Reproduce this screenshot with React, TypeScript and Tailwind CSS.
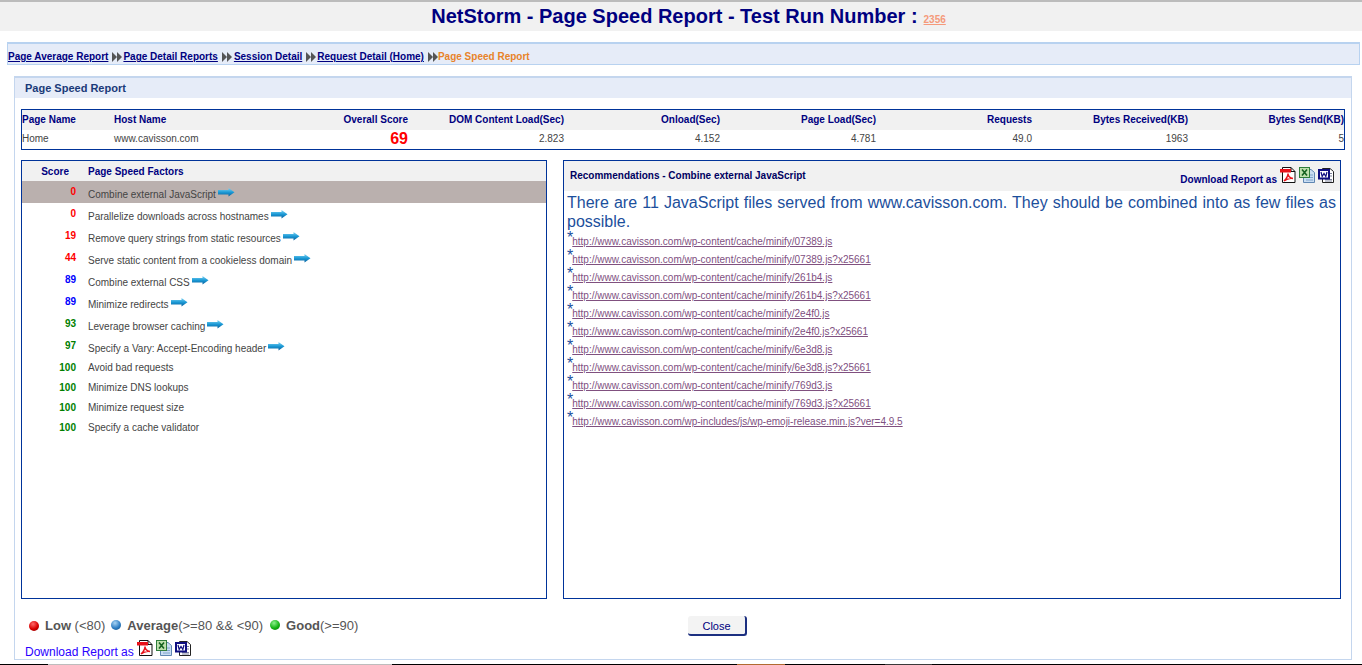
const summaryHeaders = [
  "DOM Content Load(Sec)",
  "Onload(Sec)",
  "Page Load(Sec)",
  "Requests",
  "Bytes Received(KB)",
  "Bytes Send(KB)",
];
const summaryValues = ["2.823", "4.152", "4.781", "49.0", "1963", "5"];

const factors = [
  { score: 0, name: "Combine external JavaScript", arrow: true },
  { score: 0, name: "Parallelize downloads across hostnames", arrow: true },
  { score: 19, name: "Remove query strings from static resources", arrow: true },
  { score: 44, name: "Serve static content from a cookieless domain", arrow: true },
  { score: 89, name: "Combine external CSS", arrow: true },
  { score: 89, name: "Minimize redirects", arrow: true },
  { score: 93, name: "Leverage browser caching", arrow: true },
  { score: 97, name: "Specify a Vary: Accept-Encoding header", arrow: true },
  { score: 100, name: "Avoid bad requests", arrow: false },
  { score: 100, name: "Minimize DNS lookups", arrow: false },
  { score: 100, name: "Minimize request size", arrow: false },
  { score: 100, name: "Specify a cache validator", arrow: false },
];

const links = [
  "http://www.cavisson.com/wp-content/cache/minify/07389.js",
  "http://www.cavisson.com/wp-content/cache/minify/07389.js?x25661",
  "http://www.cavisson.com/wp-content/cache/minify/261b4.js",
  "http://www.cavisson.com/wp-content/cache/minify/261b4.js?x25661",
  "http://www.cavisson.com/wp-content/cache/minify/2e4f0.js",
  "http://www.cavisson.com/wp-content/cache/minify/2e4f0.js?x25661",
  "http://www.cavisson.com/wp-content/cache/minify/6e3d8.js",
  "http://www.cavisson.com/wp-content/cache/minify/6e3d8.js?x25661",
  "http://www.cavisson.com/wp-content/cache/minify/769d3.js",
  "http://www.cavisson.com/wp-content/cache/minify/769d3.js?x25661",
  "http://www.cavisson.com/wp-includes/js/wp-emoji-release.min.js?ver=4.9.5",
];

function scoreColor(score: number) {
  if (score < 80) return "text-[#ff0000]";
  if (score < 90) return "text-[#0000ff]";
  return "text-[#008000]";
}

function Arrow() {
  return (
    <svg width="17" height="9" viewBox="0 0 17 9" className="ml-[2px] mt-[1px] shrink-0">
      <defs>
        <linearGradient id="arrowFill" x1="0" y1="0" x2="0" y2="1">
          <stop offset="0" stopColor="#7fd4f4" />
          <stop offset="0.5" stopColor="#1b9ad6" />
          <stop offset="1" stopColor="#0a5f9c" />
        </linearGradient>
      </defs>
      <path d="M0 2H10.5V0L16.5 4.2L10.5 8.5V6.5H0Z" fill="url(#arrowFill)" />
    </svg>
  );
}

function Crumb() {
  return (
    <svg width="10" height="10" viewBox="0 0 10 10" className="ml-[4px] mt-[1px] shrink-0">
      <path d="M0 0L5 5L0 10Z" fill="#555" />
      <path d="M5 0L10 5L5 10Z" fill="#555" />
    </svg>
  );
}

function PdfIcon() {
  return (
    <svg width="16" height="16" viewBox="0 0 16 16" className="shrink-0">
      <path d="M2.5 .5H11L15 4.5V15.5H2.5Z" fill="#fff" stroke="#111" />
      <path d="M11 .5V4.5H15" fill="none" stroke="#111" />
      <rect x="0" y="2" width="11" height="3.5" fill="#e8121a" />
      <path d="M4 14C6 12 8 9 8 6.5C8 9 10 11 13 11.5C10 11 6.5 12 4 14Z" fill="none" stroke="#e8121a" strokeWidth="1.4" />
    </svg>
  );
}

function SheetIcon() {
  return (
    <svg width="16" height="16" viewBox="0 0 16 16" className="shrink-0">
      <path d="M4.5 2.5H12L15.5 5.5V15.5H4.5Z" fill="#c9ddf2" stroke="#5f86b2" />
      <path d="M7 8H14M7 10.5H14M7 13H14" stroke="#7fa4cc" />
      <rect x="0.5" y="0.5" width="10" height="10" fill="#bfe0ae" stroke="#2f7d3a" />
      <path d="M3 2.5L8 8.5M8 2.5L3 8.5" stroke="#14611f" strokeWidth="1.6" />
    </svg>
  );
}

function DocIcon() {
  return (
    <svg width="16" height="16" viewBox="0 0 16 16" className="shrink-0">
      <path d="M4.5 1.5H12L15.5 4.5V15.5H4.5Z" fill="#fff" stroke="#222" />
      <path d="M11.5 6.5H14M11.5 9H14M7 12.5H14M7 14H14" stroke="#7d829c" />
      <rect x="1" y="3" width="10" height="8.5" fill="#fff" stroke="#0e0e80" strokeWidth="2" />
      <path d="M3 5L4.2 9.5L6 6.5L7.8 9.5L9 5" fill="none" stroke="#0e0e80" strokeWidth="1.2" />
    </svg>
  );
}

function Ball({ color }: { color: "red" | "blue" | "green" }) {
  const fill = {
    red: "bg-[radial-gradient(circle_at_40%_30%,#ff6a6a,#d80000_55%,#7a0000)]",
    blue: "bg-[radial-gradient(circle_at_40%_30%,#a8d4f4,#2f7fc4_55%,#0f4a80)]",
    green: "bg-[radial-gradient(circle_at_40%_30%,#8cf08c,#14b414_55%,#0a700a)]",
  }[color];
  return <span className={`inline-block h-[10px] w-[10px] rounded-full ${fill}`} />;
}

export default function App() {
  return (
    <div className="relative h-[665px] w-[1362px] overflow-hidden bg-white font-['Liberation_Sans',Arial,sans-serif]">
      <header className="flex h-[31px] items-center justify-center border-t-2 border-[#bcbcbc] bg-[#f1f1f1] pb-[2px] pl-[15px]">
        <h1 className="text-[20px] font-bold text-[#000080]">
          NetStorm - Page Speed Report - Test Run Number :
        </h1>
        <a className="ml-[6px] mt-[7px] text-[10px] font-bold text-[#f59a7b] underline">2356</a>
      </header>

      <nav className="ml-[7px] mt-[11px] flex h-[23px] w-[1353px] items-center border border-t-2 border-[#b8d2f0] bg-[#e6ecf8] pt-[5px] text-[10px] font-bold">
        <a className="text-[#000080] underline">Page Average Report</a>
        <Crumb />
        <a className="ml-[1px] text-[#000080] underline">Page Detail Reports</a>
        <Crumb />
        <a className="ml-[2px] text-[#000080] underline">Session Detail</a>
        <Crumb />
        <a className="ml-[1px] text-[#000080] underline">Request Detail (Home)</a>
        <Crumb />
        <span className="text-[#e8832a]">Page Speed Report</span>
      </nav>

      <main className="ml-[14px] mt-[11px] h-[584px] w-[1338px] border border-t-2 border-[#c4d6ee] pr-[6px]">
        <h2 className="flex h-[20px] w-[1336px] items-center bg-[#e6ecf8] pl-[10px] text-[11px] font-bold text-[#1a3a78]">
          Page Speed Report
        </h2>

        <section className="ml-[6px] mt-[11px] h-[41px] w-[1324px] border border-[#003399] text-[10px] leading-none">
          <div className="grid h-[20px] grid-cols-[92px_202px_92px_repeat(6,156px)] items-center bg-[#f1f1f1] pb-[1px] font-bold text-[#000080]">
            <div>Page Name</div>
            <div>Host Name</div>
            <div className="text-right">Overall Score</div>
            {summaryHeaders.map((h) => (
              <div key={h} className="text-right">{h}</div>
            ))}
          </div>
          <div className="grid h-[19px] grid-cols-[92px_202px_92px_repeat(6,156px)] items-center pb-[2px] text-[#444]">
            <div>Home</div>
            <div>www.cavisson.com</div>
            <div className="text-right text-[16px] font-bold text-[#ff0000]">69</div>
            {summaryValues.map((v, i) => (
              <div key={i} className="text-right">{v}</div>
            ))}
          </div>
        </section>

        <div className="ml-[6px] mt-[10px] flex gap-[16px]">
          <section className="h-[439px] w-[526px] border border-[#003399]">
            <div className="flex h-[20px] items-center bg-[#f1f1f1] text-[10px] font-bold text-[#000080]">
              <span className="w-[47px] text-right">Score</span>
              <span className="ml-[19px]">Page Speed Factors</span>
            </div>
            {factors.map((f, i) => (
              <div
                key={f.name}
                className={`flex items-center text-[10px] ${f.arrow ? "h-[22px]" : "h-[20px]"} ${i === 0 ? "bg-[#bab0ae]" : ""}`}
              >
                <span className={`w-[54px] text-right font-bold ${f.arrow ? "mb-[2px]" : ""} ${scoreColor(f.score)}`}>{f.score}</span>
                <span className={`ml-[12px] text-[#444] ${f.arrow ? "mt-[4px]" : ""}`}>{f.name}</span>
                {f.arrow && <Arrow />}
              </div>
            ))}
          </section>

          <section className="h-[439px] w-[778px] border border-[#003399]">
            <div className="relative h-[30px] bg-[#f1f1f1]">
              <div className="pl-[6px] pt-[7px] text-[10px] font-bold text-[#000060]">
                Recommendations - Combine external JavaScript
              </div>
              <div className="absolute right-[6px] top-[6px] flex items-end gap-[3px]">
                <span className="mb-[-4px] text-[10px] font-bold text-[#000080]">Download Report as</span>
                <PdfIcon />
                <SheetIcon />
                <DocIcon />
              </div>
            </div>
            <div className="px-[3px] pt-[2px]">
              <p className="pr-[1px] text-justify text-[16px] leading-[19px] text-[#1c4f9c]">
                There are 11 JavaScript files served from www.cavisson.com. They should be combined into as few files as possible.
              </p>
              <ul>
                {links.map((l) => (
                  <li key={l} className="flex h-[18px] items-start">
                    <span className="mr-[-1px] mt-[-1px] text-[16px] leading-[16px] text-[#1c4f9c]">*</span>
                    <a className="mt-[5px] text-[10px] leading-[12px] text-[#80507f] underline">{l}</a>
                  </li>
                ))}
              </ul>
            </div>
          </section>
        </div>

        <div className="relative ml-[14px] mt-[18px] flex h-[18px] items-center text-[13px] text-[#555]">
          <Ball color="red" />
          <span className="ml-[6px]"><b>Low</b> (&lt;80)</span>
          <span className="ml-[6px]"><Ball color="blue" /></span>
          <span className="ml-[6px]"><b>Average</b>(&gt;=80 &amp;&amp; &lt;90)</span>
          <span className="ml-[7px]"><Ball color="green" /></span>
          <span className="ml-[6px]"><b>Good</b>(&gt;=90)</span>
          <button className="absolute left-[659px] top-[-1px] h-[20px] w-[59px] rounded-[3px] border-r-2 border-b-2 border-[#1c2f80] bg-[#f3f3f3] pt-[2px] text-[11px] text-[#000080]">
            Close
          </button>
        </div>

        <div className="ml-[10px] mt-[5px] flex items-start gap-[3px]">
          <span className="mt-[3px] text-[12px] text-[#2a00ff]">Download Report as</span>
          <PdfIcon />
          <SheetIcon />
          <DocIcon />
        </div>
      </main>

      <div className="absolute bottom-0 left-0 flex h-[1px] w-full bg-black">
        <span className="ml-[48px] w-[344px] bg-[#bdbdbd]" />
        <span className="ml-[345px] w-[48px] bg-[#b06a30]" />
        <span className="ml-[100px] w-[47px] bg-[#3a3a3a]" />
      </div>
    </div>
  );
}
